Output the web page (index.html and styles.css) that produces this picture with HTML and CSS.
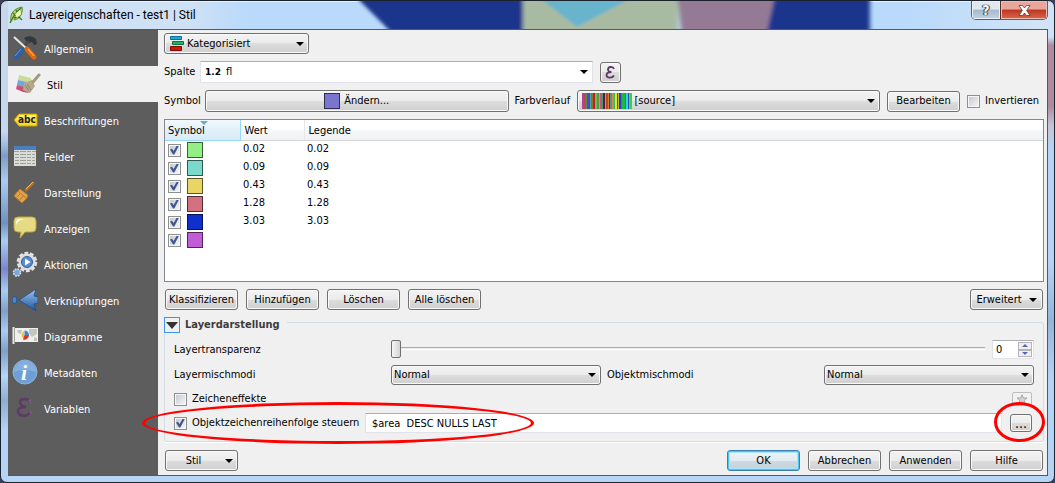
FILE: index.html
```
<!DOCTYPE html>
<html lang="de">
<head>
    <meta charset="UTF-8">
    <meta name="viewport" content="width=device-width, initial-scale=1.0">
    <title>Layereigenschaften - test1 | Stil</title>
    <link rel="stylesheet" href="styles.css">
</head>
<body>
    <div class="window">
        <header class="titlebar">
            <svg class="titlebar-glass" viewBox="0 0 1040 28" preserveAspectRatio="none" aria-hidden="true">
                <defs><filter id="soft"><feGaussianBlur stdDeviation="2 1"/></filter></defs>
                <g filter="url(#soft)">
                    <path d="M346-6 386 34H515V-6z" fill="#1f368c"/>
                    <path d="M515-6H670V34H515z" fill="#a8bba2"/>
                    <path d="M528-6 569 26 629-6z" fill="#67b4cd"/>
                    <path d="M669-6H767L758 34H674z" fill="#957a95"/>
                    <path d="M767-6H862V34H758z" fill="#1f368c"/>
                </g>
            </svg>
            <div class="titlebar-text">
                <svg width="16" height="18" viewBox="0 0 16 18" aria-hidden="true">
                    <path d="M2 15C1 8 4 3 13 1c1 5-1 12-8 13" fill="#b8d46a" stroke="#5f8a2c"/>
                    <path d="M1 17C4 11 7 6 12 2M4 7l3 3M7 4l2 3M5 12l5-1M9 10l4 4" fill="none" stroke="#3f7a22" stroke-width="1.4"/>
                    <path d="M6 8l5-4 1 4-4 4z" fill="#eef7b4"/>
                </svg>
                <span>Layereigenschaften - test1 | Stil</span>
            </div>
            <div class="window-buttons">
                <button type="button" class="win-btn win-help" aria-label="Hilfe">?</button>
                <button type="button" class="win-btn win-close" aria-label="Schließen">
                    <svg width="13" height="11" viewBox="0 0 13 11" aria-hidden="true">
                        <path d="M1 .5h3.500L6.500 3 8.500.5H12L8.700 5.500 12 10.500H8.500L6.500 8 4.500 10.500H1L4.300 5.500z" fill="#fff" stroke="#5a3a3a" stroke-width=".8"/>
                    </svg>
                </button>
            </div>
        </header>

        <div class="client">
            <nav class="sidebar">
                <a href="#allgemein" class="nav-item">
                    <svg viewBox="0 0 26 26" aria-hidden="true">
                        <path d="M12 3c4-3 9-2 12 1l1 5-3 1-2-3-3 1-2-1z" fill="#33383a"/>
                        <path d="M17 6 7 17" stroke="#454c4f" stroke-width="3"/>
                        <path d="M2 2 15 14" stroke="#e8e8e8" stroke-width="2"/>
                        <path d="M10 15 4 22" stroke="#2f5fa5" stroke-width="5" stroke-linecap="round"/>
                        <path d="M9 14 3 21" stroke="#6f9ad0" stroke-width="1"/>
                        <path d="M15 14 22 22" stroke="#e2650f" stroke-width="5" stroke-linecap="round"/>
                        <path d="M16 14 22 21" stroke="#ffa04d" stroke-width="1.500"/>
                    </svg>
                    <span>Allgemein</span>
                </a>
                <a href="#stil" class="nav-item active">
                    <svg viewBox="0 0 26 26" aria-hidden="true">
                        <path d="M4 4 16 7 17 12 3 9z" fill="#cbdc9a"/>
                        <path d="M3 9 12 11 10 17 2 14z" fill="#76a5dc"/>
                        <path d="M2 14 9 16 14 22 8 21 1 18z" fill="#c95274"/>
                        <path d="M9 12 17 9 20 15 15 22 8 19z" fill="#b5a98a"/>
                        <path d="M10 14 14 20M12 13l4 6" stroke="#90866a" stroke-width="1"/>
                        <path d="M18 11 24 4" stroke="#a69a7c" stroke-width="3" stroke-linecap="round"/>
                    </svg>
                    <span>Stil</span>
                </a>
                <a href="#beschriftungen" class="nav-item">
                    <svg viewBox="0 0 26 26" aria-hidden="true">
                        <path d="M2 13 7 7H24Q25 7 25 8V18Q25 19 24 19H7z" fill="#f7dc2e" stroke="#c9a400"/>
                        <path d="M4 12.500 8 8H24v4z" fill="#fff07a"/>
                        <text x="6" y="16" class="icon-abc">abc</text>
                    </svg>
                    <span>Beschriftungen</span>
                </a>
                <a href="#felder" class="nav-item">
                    <svg viewBox="0 0 26 26" aria-hidden="true">
                        <path d="M2 3H24V23H2z" fill="#dcdcd6"/>
                        <path d="M2 3H24V7H2z" fill="#4a7fc1"/>
                        <path d="M2 8.500H24M3 11.500H23M3 14.500H23M3 17.500H23M3 20.500H23" stroke="#a0a09a"/>
                        <path d="M7.500 8V23M14.500 8V23M19.500 8V23" stroke="#dcdcd6"/>
                    </svg>
                    <span>Felder</span>
                </a>
                <a href="#darstellung" class="nav-item">
                    <svg viewBox="0 0 26 26" aria-hidden="true">
                        <path d="M14 11 21 4" stroke="#b3712a" stroke-width="3" stroke-linecap="round"/>
                        <path d="M14 10 21 3" stroke="#eeb766" stroke-width="1"/>
                        <path d="M8 10 16 16 15 19 10 24 2 17 5 13z" fill="#e0a24a" stroke="#b3742c"/>
                        <path d="M6 12 14 19M8 15l-3 3M11 17l-3 4" stroke="#b87a31"/>
                    </svg>
                    <span>Darstellung</span>
                </a>
                <a href="#anzeigen" class="nav-item">
                    <svg viewBox="0 0 26 26" aria-hidden="true">
                        <path d="M6 2H20Q24 2 24 6V13Q24 17 20 17H13L8 23 9 17H6Q2 17 2 13V6Q2 2 6 2z" fill="#e6db84" stroke="#bca93c"/>
                        <path d="M4 8Q4 4 8 4H14Q6 4 4 10z" fill="#fffdf0"/>
                    </svg>
                    <span>Anzeigen</span>
                </a>
                <a href="#aktionen" class="nav-item">
                    <svg viewBox="0 0 26 26" aria-hidden="true">
                        <circle cx="15" cy="11" r="9" fill="none" stroke="#e4e4e4" stroke-width="2.500" stroke-dasharray="3.800 1.850"/>
                        <circle cx="15" cy="11" r="8.500" fill="#dedede"/>
                        <circle cx="15" cy="11" r="5.500" fill="#5b8dc9" stroke="#2f5e9c"/>
                        <path d="M13 7.500 18.500 11 13 14.500z" fill="#fff"/>
                        <circle cx="5" cy="21.500" r="3.500" fill="#7ba6d8" stroke="#d5dbe2" stroke-width="1.600" stroke-dasharray="1.800 .95"/>
                    </svg>
                    <span>Aktionen</span>
                </a>
                <a href="#verknuepfungen" class="nav-item">
                    <svg viewBox="0 0 26 26" aria-hidden="true">
                        <defs><linearGradient id="arrow" x2="0" y2="1"><stop offset="0" stop-color="#9cc3ec"/><stop offset="1" stop-color="#1c56a0"/></linearGradient></defs>
                        <path d="M7 13 24 2 22 9 26 10V16L22 17 24 24z" fill="url(#arrow)" stroke="#1d4c8c" stroke-width=".8"/>
                        <ellipse cx="2.500" cy="13" rx="2.500" ry="3.500" fill="#4d84c4" stroke="#1d4c8c" stroke-width=".8"/>
                    </svg>
                    <span>Verknüpfungen</span>
                </a>
                <a href="#diagramme" class="nav-item">
                    <svg viewBox="0 0 26 26" aria-hidden="true">
                        <path d="M3 5H26V19H3z" fill="#efefec"/>
                        <path d="M5 7h5l-1 4-3-1zM17 6h8v5l-5 3-3-4zM22 14l3 1v3h-3z" fill="#c5c5bd"/>
                        <path d="M1.500 4V21" stroke="#e9e9e9" stroke-width="2"/>
                        <path d="M12 8V16A4.500 4.500 0 0 1 12 8z" fill="#f0c62f"/>
                        <path d="M12.500 7.500A4.500 4.500 0 0 1 17 12H12.500z" fill="#4a87c9"/>
                        <path d="M12.500 12H17A4.500 4.500 0 0 1 11 16.500z" fill="#cf3a2a"/>
                    </svg>
                    <span>Diagramme</span>
                </a>
                <a href="#metadaten" class="nav-item">
                    <svg viewBox="0 0 26 26" aria-hidden="true">
                        <circle cx="13" cy="13" r="12" fill="#6f9fd4" stroke="#8db4e0"/>
                        <path d="M2 13A11 11 0 0 1 24 13Q13 9 2 13z" fill="#85afdd"/>
                        <text x="9" y="21" class="icon-info">i</text>
                    </svg>
                    <span>Metadaten</span>
                </a>
                <a href="#variablen" class="nav-item">
                    <svg viewBox="0 0 26 26" aria-hidden="true">
                        <path d="M18 7C17 3 8 3 8 7Q8 11 14 12Q6 12 6 16C6 22 16 22 18 17" fill="none" stroke="#5e3a66" stroke-width="2.500"/>
                        <path d="M16 5l3-1v5zM17 17l3-1-1 4z" fill="#7d5a88"/>
                    </svg>
                    <span>Variablen</span>
                </a>
            </nav>

            <main class="panel">
                <div class="row">
                    <div class="combo combo-renderer">
                        <select aria-label="Darstellungsart"><option>Kategorisiert</option></select>
                        <svg class="combo-icon" width="14" height="15" viewBox="0 0 14 15" aria-hidden="true">
                            <path d="M.5.5h11v3h-11z" fill="#1fa7d3" stroke="#0c6f9c"/>
                            <path d="M2.500 5.500h11v3h-11z" fill="#1db46a" stroke="#0b7440"/>
                            <path d="M.5 10.500h11v4h-11z" fill="#d0160c" stroke="#850b05"/>
                        </svg>
                    </div>
                </div>

                <div class="row">
                    <label class="label-column" for="spalte">Spalte</label>
                    <div class="column-box">
                        <span class="type-tag">1.2</span>
                        <input type="text" id="spalte" value="fl">
                        <button type="button" class="arrow-btn" aria-label="Spalte auswählen"><i class="caret"></i></button>
                    </div>
                    <button type="button" class="btn eps-btn" aria-label="Ausdruck">
                        <svg width="11" height="13" viewBox="0 0 11 13" aria-hidden="true">
                            <path d="M9 3C8 0 3 .5 3 3.500Q3 6 6.500 6Q1.500 6 1.500 9C1.500 12.500 7.500 12.500 9 9.500" fill="none" stroke="#5e3a66" stroke-width="1.800"/>
                        </svg>
                    </button>
                </div>

                <div class="row">
                    <span class="label-symbol">Symbol</span>
                    <button type="button" class="btn change-btn"><i class="swatch violet"></i>Ändern...</button>
                    <label class="label-ramp" for="farbverlauf">Farbverlauf</label>
                    <div class="combo combo-ramp">
                        <select id="farbverlauf"><option>[source]</option></select>
                        <i class="ramp"></i>
                    </div>
                    <button type="button" class="btn edit-btn">Bearbeiten</button>
                    <label class="check invert"><input type="checkbox">Invertieren</label>
                </div>

                <div class="tree">
                    <table>
                        <thead>
                            <tr><th class="sorted">Symbol</th><th>Wert</th><th>Legende</th></tr>
                        </thead>
                        <tbody>
                            <tr><td><div class="symbol-cell"><input type="checkbox" checked aria-label="0.02"><i class="swatch green"></i></div></td><td>0.02</td><td>0.02</td></tr>
                            <tr><td><div class="symbol-cell"><input type="checkbox" checked aria-label="0.09"><i class="swatch teal"></i></div></td><td>0.09</td><td>0.09</td></tr>
                            <tr><td><div class="symbol-cell"><input type="checkbox" checked aria-label="0.43"><i class="swatch yellow"></i></div></td><td>0.43</td><td>0.43</td></tr>
                            <tr><td><div class="symbol-cell"><input type="checkbox" checked aria-label="1.28"><i class="swatch rose"></i></div></td><td>1.28</td><td>1.28</td></tr>
                            <tr><td><div class="symbol-cell"><input type="checkbox" checked aria-label="3.03"><i class="swatch blue"></i></div></td><td>3.03</td><td>3.03</td></tr>
                            <tr><td><div class="symbol-cell"><input type="checkbox" checked aria-label="Andere"><i class="swatch purple"></i></div></td><td></td><td></td></tr>
                        </tbody>
                    </table>
                </div>

                <div class="button-row">
                    <button type="button" class="btn">Klassifizieren</button>
                    <button type="button" class="btn">Hinzufügen</button>
                    <button type="button" class="btn">Löschen</button>
                    <button type="button" class="btn">Alle löschen</button>
                    <button type="button" class="btn menu-btn push">Erweitert<i class="caret"></i></button>
                </div>

                <fieldset class="group">
                    <legend>
                        <button type="button" class="collapse-btn" aria-label="Einklappen"><i class="triangle"></i></button>
                        <span>Layerdarstellung</span>
                    </legend>

                    <div class="group-row transparency">
                        <label for="transparenz">Layertransparenz</label>
                        <input type="range" id="transparenz" min="0" max="100" value="0">
                        <div class="spin">
                            <input type="text" value="0" aria-label="Transparenz">
                            <div class="spin-buttons">
                                <button type="button" aria-label="Mehr"><i class="up"></i></button>
                                <button type="button" aria-label="Weniger"><i class="down"></i></button>
                            </div>
                        </div>
                    </div>

                    <div class="group-row blend">
                        <label for="layermodus">Layermischmodi</label>
                        <div class="combo"><select id="layermodus"><option>Normal</option></select></div>
                        <label for="objektmodus" class="second">Objektmischmodi</label>
                        <div class="combo"><select id="objektmodus"><option>Normal</option></select></div>
                    </div>

                    <div class="group-row effects">
                        <label class="check"><input type="checkbox">Zeicheneffekte</label>
                        <button type="button" class="star-btn" disabled aria-label="Effekte anpassen">
                            <svg width="12" height="11" viewBox="0 0 12 11" aria-hidden="true">
                                <path d="M6 .8 7.400 4H11L8.200 6.300 9.200 10 6 7.800 2.800 10 3.800 6.300 1 4H4.600z" fill="#d4d4d4" stroke="#a6a6a6"/>
                            </svg>
                        </button>
                    </div>

                    <div class="group-row order">
                        <label class="check"><input type="checkbox" checked>Objektzeichenreihenfolge steuern</label>
                        <input type="text" class="order-input" value="$area  DESC NULLS LAST" aria-label="Reihenfolge">
                        <button type="button" class="btn dots-btn">...</button>
                        <i class="mark mark-order"></i>
                        <i class="mark mark-dots"></i>
                    </div>
                </fieldset>

                <footer class="button-row">
                    <button type="button" class="btn menu-btn style-btn">Stil<i class="caret"></i></button>
                    <button type="button" class="btn ok-btn push">OK</button>
                    <button type="button" class="btn">Abbrechen</button>
                    <button type="button" class="btn">Anwenden</button>
                    <button type="button" class="btn">Hilfe</button>
                </footer>
            </main>
        </div>
    </div>
</body>
</html>
```
FILE: styles.css
```
* {
    box-sizing: border-box;
}

body {
    margin: 0;
    background: #3b4058;
    color: #000;
    font-family: "DejaVu Sans Condensed", "DejaVu Sans", sans-serif;
    font-size: 11px;
    line-height: 14px;
}

button, input, select {
    margin: 0;
    padding: 0;
    color: inherit;
    font: inherit;
}

i {
    display: block;
    flex: none;
}

/* Fensterrahmen */
.window {
    display: flex;
    flex-direction: column;
    min-height: 100vh;
    padding: 0 6px 6px 7px;
    border: 1px solid #1c222c;
    border-radius: 7px;
    background:
        linear-gradient(#cfe2f7 0 36px, #b08a9e 44px 105px, #c6c4d6 125px, #b4d5f6 150px 260px, #93b5da 320px, #b4d5f6 380px) right / 6px 100% no-repeat,
        linear-gradient(#c8d8ec 0 130px, #a9c6e8 140px, #7f9cc6 155px, #a9cdf2 180px, #6f91bd 222px, #a9cdf2 240px, #7a86cc 268px, #a9cdf2 290px, #7f9fc8 310px, #a9cdf2 330px, #7f9fc8 350px, #b4d5f6 375px, #8eadd2 400px, #b4d5f6 430px) left / 7px 100% no-repeat,
        #b5d6f8;
}

.titlebar {
    display: grid;
    grid-template-columns: 1fr auto;
    height: 28px;
    box-shadow: inset 0 1px 0 #eaf2fb;
    background: linear-gradient(90deg, #d0e1f4, #cfe1f5 180px, #b9dafb 240px, #b9dafb 900px, #d3e4f6);
}

.titlebar-glass {
    grid-area: 1 / 1 / 2 / 3;
    width: 100%;
    height: 28px;
}

.titlebar-text {
    grid-area: 1 / 1;
    display: flex;
    align-items: center;
    gap: 4px;
    padding-left: 1px;
    font-family: Roboto, sans-serif;
    font-size: 12px;
}

.window-buttons {
    grid-area: 1 / 2;
    display: flex;
    align-self: start;
    height: 19px;
    border: 1px solid #57616e;
    border-top: 0;
    border-radius: 0 0 5px 5px;
    overflow: hidden;
}

.win-btn {
    display: flex;
    align-items: center;
    justify-content: center;
    border: 0;
}

.win-help {
    width: 28px;
    background: linear-gradient(#dfe7f1 45%, #a8b9cd 50%, #c3d3e5);
    box-shadow: inset 0 0 0 1px #e9f0f8;
    color: #fff;
    font-size: 14px;
    font-weight: bold;
    text-shadow: 0 0 1px #222c3a, 1px 0 1px #222c3a, -1px 0 1px #222c3a;
}

.win-close {
    width: 47px;
    border-left: 1px solid #5b2a26;
    background: linear-gradient(#e9a79b 45%, #bf3520 50%, #d8674a);
    box-shadow: inset 0 0 0 1px #eebdb2;
}

.client {
    display: flex;
    flex: 1;
    border-top: 1px solid #4f5a66;
    border-right: 1px solid #4f5a66;
    border-bottom: 1px solid #4f5a66;
    background: #f0f0f0;
}

/* Seitenleiste */
.sidebar {
    flex: none;
    width: 150px;
    background: #5d5d5d;
}

.nav-item {
    display: flex;
    align-items: center;
    gap: 6px;
    height: 36px;
    padding-left: 4px;
    color: #fff;
    text-decoration: none;
}

.nav-item svg {
    width: 26px;
    height: 26px;
}

.nav-item span {
    padding-top: 3px;
}

.nav-item.active {
    padding-left: 7px;
    background: #f0f0f0;
    color: #000;
}

.icon-abc {
    fill: #222;
    font-size: 10px;
    font-weight: bold;
}

.icon-info {
    fill: #fff;
    font: italic bold 22px "Liberation Serif", serif;
}

/* Inhalt */
.panel {
    display: flex;
    flex: 1;
    flex-direction: column;
    gap: 7px;
    min-width: 0;
    padding: 3px 3px 4px 6px;
}

.row {
    display: flex;
    align-items: center;
}

.btn, .combo select {
    border: 1px solid #707070;
    border-radius: 3px;
    background: linear-gradient(#f3f3f3, #ebebeb 50%, #dddddd 50%, #cfcfcf);
    box-shadow: inset 0 0 0 1px #fafafa;
}

.btn {
    display: flex;
    align-items: center;
    justify-content: center;
    width: 73px;
    height: 21px;
    white-space: nowrap;
}

.caret {
    border: 4px solid transparent;
    border-top-color: #000;
    border-bottom: 0;
}

.combo {
    display: grid;
    align-items: center;
}

.combo select {
    grid-area: 1 / 1;
    width: 100%;
    height: 20px;
    padding-left: 2px;
    appearance: none;
}

.combo::after {
    content: "";
    grid-area: 1 / 1;
    justify-self: end;
    margin-right: 5px;
    border: 4px solid transparent;
    border-top-color: #000;
    border-bottom: 0;
    pointer-events: none;
}

.combo-renderer {
    width: 145px;
}

.combo-renderer select {
    height: 21px;
    padding-left: 22px;
}

.combo-icon {
    grid-area: 1 / 1;
    margin-left: 6px;
    pointer-events: none;
}

.label-column {
    width: 36px;
}

.column-box {
    display: flex;
    align-items: center;
    flex: 0 1 393px;
    height: 22px;
    margin-right: 7px;
    padding: 0 4px;
    border: 1px solid #e2e3ea;
    border-top-color: #abadb3;
    background: #fff;
}

.column-box input {
    flex: 1;
    min-width: 0;
    border: 0;
    outline: none;
}

.type-tag {
    width: 21px;
    font-family: "DejaVu Sans", sans-serif;
    font-size: 9px;
    font-weight: bold;
}

.arrow-btn {
    border: 0;
    background: none;
}

.eps-btn {
    width: 21px;
}

.label-symbol {
    width: 41px;
}

.change-btn {
    flex: 1 1 300px;
    gap: 4px;
    height: 22px;
    margin-right: 6px;
}

.label-ramp {
    flex: none;
    width: 62px;
    white-space: nowrap;
}

.combo-ramp {
    flex: 1 1 300px;
    margin-right: 7px;
}

.combo-ramp select {
    height: 22px;
    padding-left: 57px;
}

.ramp {
    grid-area: 1 / 1;
    width: 50px;
    height: 16px;
    margin-left: 5px;
    background: linear-gradient(90deg,
        #b8408c 0 2px, #b04a60 2px 4px, #5d8a4a 4px 5px, #5b43c8 5px 8px, #38b0a0 8px 9px, #a06a28 9px 11px,
        #c01c34 11px 13px, #4fd048 13px 15px, #6b8f3a 15px 17px, #ef8a7a 17px 18px, #c84f96 18px 20px,
        #30a060 20px 21px, #6a1638 21px 23px, #38c8d0 23px 24px, #b04a2c 24px 26px, #e07838 26px 27px,
        #a01828 27px 28px, #4a9a8a 28px 30px, #d08a48 30px 32px, #3cb458 32px 33px, #f0e030 33px 35px,
        #3a48c8 35px 36px, #a8c840 36px 37px, #3830d8 37px 39px, #d0389c 39px 40px, #20b838 40px 43px,
        #3870d8 43px 44px, #28d8e8 44px 46px, #3848c0 46px 47px, #c8a038 47px 48px, #30d838 48px 50px);
    pointer-events: none;
}

.edit-btn {
    flex: none;
    margin-right: 7px;
}

.check {
    display: flex;
    align-items: center;
    gap: 5px;
    white-space: nowrap;
}

.invert {
    flex: none;
    width: 77px;
}

input[type="checkbox"] {
    display: grid;
    flex: none;
    width: 13px;
    height: 13px;
    padding: 1px;
    border: 1px solid #8e8f8f;
    background: linear-gradient(135deg, #c6cbd2, #f2f3f5) content-box, #f6f6f6;
    appearance: none;
}

input[type="checkbox"]:checked::after {
    content: "";
    background: #41558f;
    clip-path: polygon(0 45%, 22% 35%, 40% 62%, 76% 0, 100% 0, 48% 100%, 34% 100%);
}

.swatch {
    width: 16px;
    height: 16px;
    border: 1px solid rgba(0, 0, 0, 0.6);
}

.violet { background: #7876cf; }
.green { background: #94ee86; }
.teal { background: #7bd9cb; }
.yellow { background: #e9d564; }
.rose { background: #d27281; }
.blue { background: #1030cd; }
.purple { background: #c15ed6; }

/* Kategorien */
.tree {
    flex: 1;
    border: 1px solid #828790;
    background: #fff;
}

.tree table {
    width: 100%;
    border-collapse: collapse;
    table-layout: fixed;
}

.tree th {
    height: 20px;
    padding: 2px 0 0 4px;
    border-right: 1px solid #e4e8ee;
    border-bottom: 1px solid #d5d5d5;
    background: linear-gradient(#fff 45%, #f5f6f8 55%, #f1f2f4);
    font-weight: normal;
    text-align: left;
}

.tree th:nth-child(1) { width: 75px; }
.tree th:nth-child(2) { width: 64px; }
.tree th:last-child { border-right: 0; }

.tree th.sorted {
    padding-left: 3px;
    border-right-color: #96d9f9;
    border-bottom-color: #96d9f9;
    background: linear-gradient(#f2f9fc, #e1f1f9 50%, #d8ecf6);
}

/* Sortierpfeil */
.tree th.sorted::before {
    content: "";
    position: absolute;
    margin: -3px 0 0 32px;
    border: 4px solid transparent;
    border-top-color: #6fa9c4;
    border-bottom: 0;
}

.tree td {
    height: 18px;
    padding: 0 0 0 3px;
    line-height: 16px;
    vertical-align: top;
}

.symbol-cell {
    display: flex;
    align-items: center;
    gap: 6px;
    height: 18px;
    padding-top: 1px;
}

.button-row {
    display: flex;
    gap: 8px;
    padding-left: 1px;
    padding-right: 1px;
}

.push {
    margin-left: auto;
}

.menu-btn {
    gap: 7px;
}

.style-btn {
    gap: 24px;
    padding-left: 16px;
}

.ok-btn {
    border-color: #3c7fb1;
    background: linear-gradient(#eef4f7, #e3ebf0 50%, #cfdbe2 50%, #c3d0d8);
    box-shadow: inset 0 0 0 1px #48c6f0, inset 0 0 0 2px #a9e4f8;
}

/* Layerdarstellung */
.group {
    display: flex;
    flex-direction: column;
    gap: 6px;
    min-width: 0;
    margin: 0 0 1px;
    padding: 12px 9px 8px;
    border: 1px solid #d3dde6;
    border-radius: 3px;
    box-shadow: 0 1px 0 #fff;
}

.group legend {
    display: flex;
    gap: 5px;
    height: 11px;
    margin-left: -10px;
    padding: 0 7px 0 0;
    color: #3c3c3c;
    font-weight: bold;
    line-height: 16px;
}

.collapse-btn {
    display: flex;
    align-items: center;
    justify-content: center;
    width: 16px;
    height: 16px;
    border: 1px solid #3a96f0;
    background: #f0f0f0;
}

.triangle {
    border: 6px solid transparent;
    border-top: 7px solid #333;
    border-bottom: 0;
}

.group-row {
    display: grid;
    grid-template-columns: 217px 1fr 223px 1fr;
    align-items: center;
    height: 20px;
}

.transparency {
    grid-template-columns: 217px 1fr 42px;
    height: 19px;
}

.transparency input[type="range"] {
    height: 19px;
    margin-right: 7px;
    background: none;
    appearance: none;
}

input[type="range"]::-webkit-slider-runnable-track {
    display: flex;
    align-items: center;
    height: 19px;
    background: linear-gradient(transparent 7px, #adadad 7px 8px, #e9e9e9 8px 9px, #fff 9px 10px, transparent 10px);
}

input[type="range"]::-webkit-slider-thumb {
    width: 10px;
    height: 18px;
    border: 1px solid #707070;
    border-radius: 2px;
    background: linear-gradient(90deg, #f6f6f6, #d3d3d3);
    appearance: none;
}

.spin {
    display: flex;
    height: 19px;
    padding: 1px 1px 1px 3px;
    border: 1px solid #e2e3ea;
    border-top-color: #abadb3;
    background: #fff;
}

.spin input {
    flex: 1;
    min-width: 0;
    border: 0;
    outline: none;
}

.spin-buttons {
    display: flex;
    flex-direction: column;
    width: 14px;
}

.spin-buttons button {
    display: flex;
    flex: 1;
    align-items: center;
    justify-content: center;
    border: 1px solid #b5b5b5;
    background: #efefef;
}

.up, .down {
    border: 3px solid transparent;
}

.up {
    border-top: 0;
    border-bottom-color: #5068b0;
}

.down {
    border-bottom: 0;
    border-top-color: #5068b0;
}

.second {
    padding-left: 6px;
}

.effects {
    grid-template-columns: 1fr 20px;
    height: 16px;
    padding-right: 2px;
}

.star-btn {
    display: flex;
    align-items: center;
    justify-content: center;
    height: 14px;
    border: 1px solid #bdbdbd;
    border-radius: 2px;
    background: #f2f2f2;
}

.order {
    position: relative;
    grid-template-columns: 191px 1fr 22px;
    padding-right: 2px;
}

.order-input {
    height: 20px;
    margin-right: 8px;
    padding-left: 6px;
    border: 1px solid #e2e3ea;
    border-top-color: #abadb3;
    background: #fff;
}

.dots-btn {
    width: 22px;
    height: 18px;
    font-size: 14px;
}

/* rote Markierungen ueber der Zeile */
.mark {
    position: absolute;
    top: -11px;
    height: 42px;
    border: 3px solid #f00;
    border-radius: 50%;
    pointer-events: none;
}

.mark-order {
    left: -32px;
    width: 392px;
}

.mark-dots {
    right: -11px;
    width: 51px;
    height: 40px;
}
```
